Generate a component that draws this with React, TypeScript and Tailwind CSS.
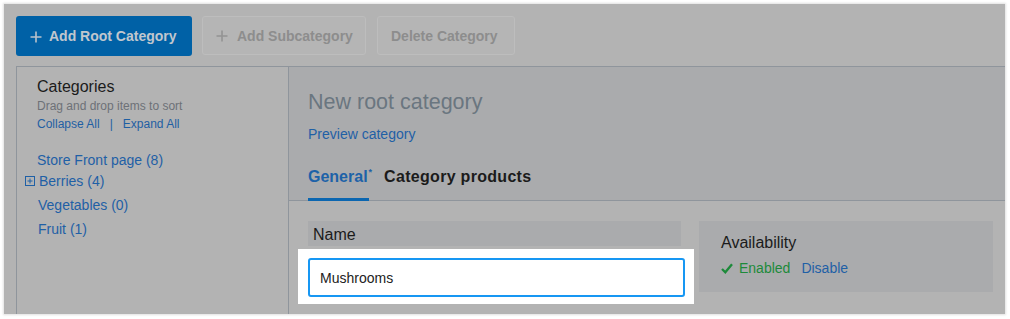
import React from "react";

const Plus = ({ color }: { color: string }) => (
  <svg width="12" height="12" viewBox="0 0 12 12" className="shrink-0">
    <path d="M6 0.5V11.5M0.5 6H11.5" stroke={color} strokeWidth="1.6" />
  </svg>
);

export default function App() {
  return (
    <div
      className="w-[1010px] h-[319px] bg-white p-[4px] overflow-hidden"
      style={{ fontFamily: '"Liberation Sans", Arial, sans-serif' }}
    >
      <div className="w-[1001px] h-[310px] bg-[#b3b3b3] shadow-[0_0_2px_1px_rgba(0,0,0,0.12)] pl-[12px] pt-[12px] flex flex-col overflow-hidden">
        {/* toolbar */}
        <div className="flex items-start h-[40px]">
          <div className="w-[176px] h-[40px] rounded-[3px] bg-[#0061a6] flex items-center pl-[14px] pt-[1px] gap-[7px]">
            <Plus color="#b9c2cb" />
            <span className="text-[14px] font-bold text-[#c0c7ce]">Add Root Category</span>
          </div>
          <div className="ml-[10px] w-[164px] h-[39px] rounded-[3px] border border-[#bdbdbd] bg-[#b5b5b5] flex items-center pl-[13px] pt-[1px] gap-[9px]">
            <Plus color="#939393" />
            <span className="text-[14px] font-bold text-[#8d8d8d]">Add Subcategory</span>
          </div>
          <div className="ml-[11px] w-[138px] h-[39px] rounded-[3px] border border-[#bdbdbd] bg-[#b5b5b5] flex items-center pl-[13px] pt-[1px]">
            <span className="text-[14px] font-bold text-[#8d8d8d]">Delete Category</span>
          </div>
        </div>

        {/* main */}
        <div className="mt-[10px] flex-1 flex border-t border-l border-[#8f959c]">
          {/* sidebar */}
          <div className="w-[272px] shrink-0 border-r border-[#8f959c] pl-[20px] pt-[10px]">
            <div className="text-[16px] leading-[20px] text-[#1b1b1b]">Categories</div>
            <div className="text-[12px] leading-[16px] text-[#6d7177] mt-[1px]">Drag and drop items to sort</div>
            <div className="text-[12px] leading-[16px] text-[#1f5fa3] mt-[2px] flex">
              <span>Collapse All</span>
              <span className="mx-[10px]">|</span>
              <span>Expand All</span>
            </div>
            <div className="mt-[18px] flex flex-col text-[14px] text-[#1f60a6]">
              <div className="leading-[20px]">Store Front page (8)</div>
              <div className="leading-[20px] mt-[1px] flex items-center -ml-[12px]">
                <svg width="10" height="10" viewBox="0 0 10 10" className="mr-[4px]">
                  <rect x="0.5" y="0.5" width="9" height="9" fill="none" stroke="#1f60a6" strokeWidth="1" />
                  <path d="M5 2.5V7.5M2.5 5H7.5" stroke="#1f60a6" strokeWidth="1" />
                </svg>
                <span>Berries (4)</span>
              </div>
              <div className="leading-[20px] mt-[4px] ml-[1px]">Vegetables (0)</div>
              <div className="leading-[20px] mt-[4px] ml-[1px]">Fruit (1)</div>
            </div>
          </div>

          {/* content */}
          <div className="flex-1 flex flex-col">
            <div className="bg-[#aaabad] border-b border-[#8f959c] pl-[19px] h-[134px] flex flex-col">
              <div className="mt-[22px] text-[21.5px] leading-[26px] text-[#6a7680]">New root category</div>
              <div className="mt-[9px] text-[14px] leading-[20px] text-[#1f60a6]">Preview category</div>
              <div className="mt-auto -mb-[1px] flex items-end">
                <div className="flex flex-col">
                  <div className="flex items-start text-[16px] font-bold leading-[22px] text-[#1d62a8]">
                    General<span className="text-[9px] leading-[10px] font-bold ml-[1px] mt-[1px]">*</span>
                  </div>
                  <div className="h-[3px] bg-[#0b66b0] mt-[10px] w-[61px]" />
                </div>
                <div className="ml-[12px] text-[16px] font-bold leading-[22px] tracking-[0.3px] text-[#1b1b1b] mb-[13px]">Category products</div>
              </div>
            </div>

            <div className="flex pl-[19px] pt-[20px] pr-[12px] gap-[18px]">
              <div className="w-[373px] flex flex-col">
                <div className="h-[25px] bg-[#aaabad] pl-[5px] pt-[2px] flex items-center text-[16px] text-[#1b1b1b]">Name</div>
                <div className="-ml-[10px] mt-[3px] w-[396px] bg-white pl-[10px] pt-[9px] pb-[7px]">
                  <div className="w-[377px] h-[39px] rounded-[3px] border-2 border-[#1797f3] flex items-center pl-[10px] pt-[1px] text-[14px] text-[#222]">
                    Mushrooms
                  </div>
                </div>
              </div>
              <div className="w-[294px] h-[71px] bg-[#aaabad] pl-[22px] pt-[12px]">
                <div className="text-[16px] leading-[20px] text-[#1b1b1b]">Availability</div>
                <div className="mt-[5px] flex items-center text-[14px] leading-[20px]">
                  <svg width="12" height="11" viewBox="0 0 12 11" className="mr-[6px]">
                    <path d="M1 6L4.3 9.3L11 1.2" fill="none" stroke="#1d8a3a" strokeWidth="2.3" />
                  </svg>
                  <span className="text-[#1d8a3a]">Enabled</span>
                  <span className="ml-[11px] text-[#1f60a6]">Disable</span>
                </div>
              </div>
            </div>
          </div>
        </div>
      </div>
    </div>
  );
}
